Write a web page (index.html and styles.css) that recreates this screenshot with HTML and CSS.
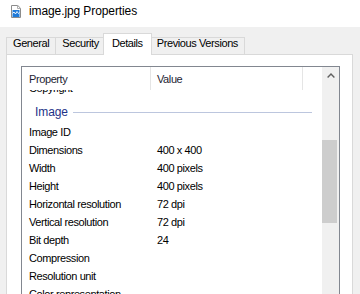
FILE: index.html
```html
<!DOCTYPE html>
<html lang="en">
<head>
    <meta charset="UTF-8">
    <meta name="viewport" content="width=device-width, initial-scale=1.0">
    <title>image.jpg Properties</title>
    <link rel="stylesheet" href="styles.css">
</head>
<body>
    <div class="window">
        <div class="titlebar">
            <svg class="file-icon" viewBox="0 0 10 13" width="10" height="13">
                <path d="M0.5 0.5 H6.8 L9.5 3.2 V12.5 H0.5 Z" fill="#fff" stroke="#8c8c8c"/>
                <path d="M6.5 0.5 V3.5 H9.5" fill="none" stroke="#b0b0b0"/>
                <rect x="1.5" y="5" width="7" height="7" fill="#1f7ad8"/>
                <path d="M1.5 8.5 L3 7 L4.5 9 L6 6.5 L7.5 8.5 L8.5 7.5" fill="none" stroke="#fff" stroke-width="0.9"/>
            </svg>
            <span class="title">image.jpg Properties</span>
        </div>

        <div class="tabs">
            <div class="tab">General</div>
            <div class="tab">Security</div>
            <div class="tab active">Details</div>
            <div class="tab">Previous Versions</div>
        </div>

        <div class="panel">
            <div class="listview">
                <div class="list-main">
                    <div class="list-header">
                        <div class="hcol hcol-prop">Property</div>
                        <div class="hcol hcol-value">Value</div>
                        <div class="hcol hcol-rest"></div>
                    </div>
                    <div class="list-body">
                        <div class="rows">
                            <div class="row"><div class="cell-prop">Copyright</div><div class="cell-value"></div></div>
                            <div class="group"><span class="group-name">Image</span><div class="group-line"></div></div>
                            <div class="row"><div class="cell-prop">Image ID</div><div class="cell-value"></div></div>
                            <div class="row"><div class="cell-prop">Dimensions</div><div class="cell-value">400 x 400</div></div>
                            <div class="row"><div class="cell-prop">Width</div><div class="cell-value">400 pixels</div></div>
                            <div class="row"><div class="cell-prop">Height</div><div class="cell-value">400 pixels</div></div>
                            <div class="row"><div class="cell-prop">Horizontal resolution</div><div class="cell-value">72 dpi</div></div>
                            <div class="row"><div class="cell-prop">Vertical resolution</div><div class="cell-value">72 dpi</div></div>
                            <div class="row"><div class="cell-prop">Bit depth</div><div class="cell-value">24</div></div>
                            <div class="row"><div class="cell-prop">Compression</div><div class="cell-value"></div></div>
                            <div class="row"><div class="cell-prop">Resolution unit</div><div class="cell-value"></div></div>
                            <div class="row"><div class="cell-prop">Color representation</div><div class="cell-value"></div></div>
                            <div class="row"><div class="cell-prop">Compressed bits/pixel</div><div class="cell-value"></div></div>
                        </div>
                    </div>
                </div>
                <div class="scrollbar">
                    <div class="scroll-up">
                        <svg viewBox="0 0 8 5" width="8" height="5">
                            <polyline points="0.6,4.4 4,1 7.4,4.4" fill="none" stroke="#606060" stroke-width="1.4"/>
                        </svg>
                    </div>
                    <div class="scroll-track">
                        <div class="scroll-thumb"></div>
                    </div>
                </div>
            </div>
        </div>
    </div>
</body>
</html>
```

FILE: styles.css
```css
* {
    margin: 0;
    padding: 0;
    box-sizing: border-box;
}

body {
    background-color: #f0f0f0;
    font-family: "Liberation Sans", Arial, sans-serif;
    font-size: 11px;
    letter-spacing: -0.4px;
    color: #000;
    overflow: hidden;
}

.window {
    width: 360px;
    height: 294px;
    overflow: hidden;
}

/* title bar */
.titlebar {
    height: 27px;
    background-color: #fff;
    display: flex;
    align-items: flex-start;
    padding: 4px 0 0 11px;
}

.file-icon {
    margin-top: 1px;
    flex: none;
}

.title {
    font-size: 12px;
    letter-spacing: -0.1px;
    line-height: 14px;
    margin-left: 8px;
}

/* tabs */
.tabs {
    display: flex;
    align-items: flex-end;
    height: 27px;
    padding-left: 6px;
}

.tab {
    height: 17px;
    padding: 0 6px;
    line-height: 11px;
    border: 1px solid #d9d9d9;
    border-bottom: none;
    margin-right: -1px;
    background-color: #f0f0f0;
}

.tab.active {
    position: relative;
    z-index: 1;
    height: 22px;
    padding: 3px 8px 0;
    line-height: 12px;
    margin: 0 -2px -1px -2px;
    background-color: #fff;
}

/* tab page */
.panel {
    margin: 0 7px 0 6px;
    height: 250px;
    border: 1px solid #d9d9d9;
    background-color: #fff;
    padding: 11px 12px 0 14px;
}

.listview {
    display: flex;
    height: 240px;
    border: 1px solid #828790;
}

.list-main {
    flex: 1;
    display: flex;
    flex-direction: column;
    overflow: hidden;
}

.list-header {
    display: flex;
    flex: none;
    height: 23px;
    color: #1e2433;
}

.hcol {
    padding-top: 1px;
    line-height: 22px;
}

.hcol-prop {
    width: 129px;
    padding-left: 7px;
    border-right: 1px solid #e5e5e5;
}

.hcol-value {
    width: 152px;
    padding-left: 6px;
    border-right: 1px solid #e5e5e5;
}

.hcol-rest {
    flex: 1;
}

.list-body {
    flex: 1;
    overflow: hidden;
}

.rows {
    margin-top: -11px;
}

.row {
    display: flex;
    height: 18px;
    padding-top: 1px;
    line-height: 17px;
    white-space: nowrap;
}

.cell-prop {
    width: 129px;
    padding-left: 7px;
}

.cell-value {
    padding-left: 6px;
}

.group {
    display: flex;
    height: 26px;
    padding: 7px 10px 0 13px;
    font-size: 12px;
    letter-spacing: -0.1px;
    line-height: 17px;
    color: #1e3287;
}

.group-line {
    flex: 1;
    height: 0;
    margin: 8px 0 0 5px;
    border-top: 1px solid #bcc6de;
}

/* scrollbar */
.scrollbar {
    flex: none;
    width: 17px;
    display: flex;
    flex-direction: column;
    background-color: #f0f0f0;
}

.scroll-up {
    height: 17px;
    display: flex;
    align-items: center;
    justify-content: center;
}

.scroll-track {
    flex: 1;
}

.scroll-thumb {
    width: 15px;
    height: 83px;
    margin-top: 56px;
    background-color: #cdcdcd;
}
```
